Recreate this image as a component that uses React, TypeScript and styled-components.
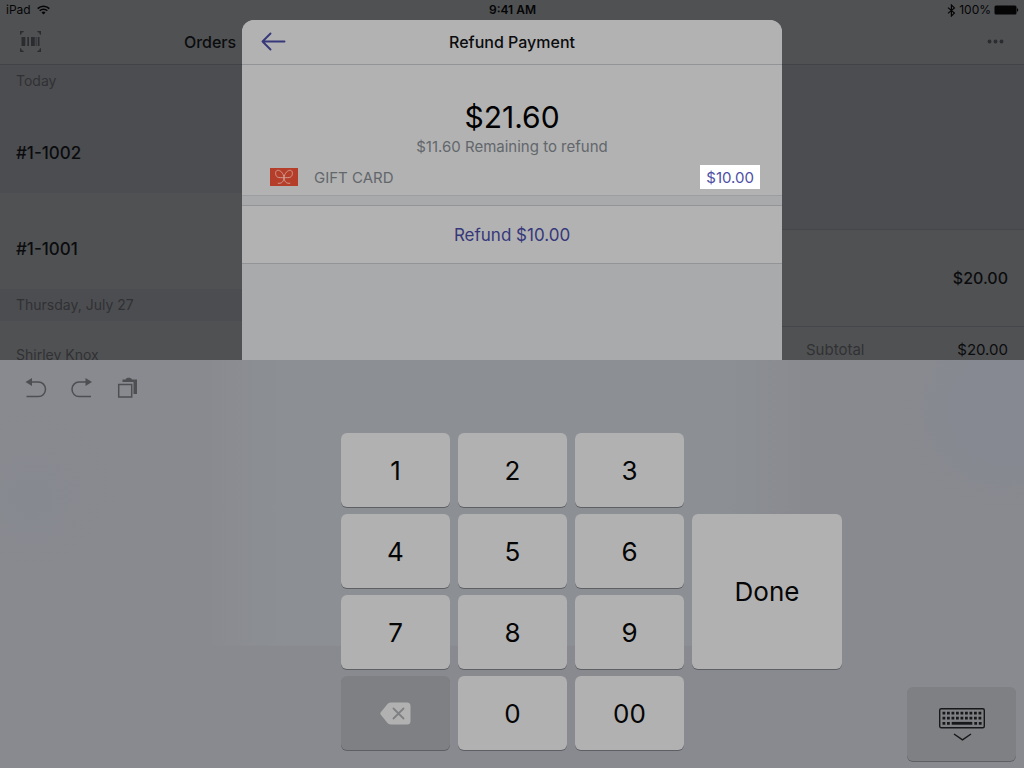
import React from "react";
import styled, { createGlobalStyle } from "styled-components";

const GlobalStyle = createGlobalStyle`
  *, *::before, *::after { box-sizing: border-box; }
  body {
    margin: 0;
    font-family: Inter, "Liberation Sans", sans-serif;
    background: #505153;
    color: #0b0c0e;
  }
  button, input { font: inherit; color: inherit; }
  button { border: 0; padding: 0; background: none; cursor: pointer; }
  h1, h2, p, ul { margin: 0; padding: 0; font-weight: 400; }
  svg { display: block; }
`;

const Screen = styled.div`
  display: flex;
  flex-direction: column;
  height: 100vh;
  min-height: 560px;
  overflow: hidden;
`;

const Stage = styled.div`
  position: relative;
  flex: 1;
  min-height: 0;
  overflow: hidden;
  display: flex;
  flex-direction: column;
`;

const StatusBar = styled.header`
  display: grid;
  grid-template-columns: 1fr auto 1fr;
  align-items: center;
  flex: none;
  height: 20px;
  padding: 0 5px 0 6px;
  font-size: 12px;
  line-height: 20px;
  color: #050506;
`;

const StatusGroup = styled.div<{ $end?: boolean }>`
  display: flex;
  align-items: center;
  gap: ${(p) => (p.$end ? 3 : 6)}px;
  justify-content: ${(p) => (p.$end ? "flex-end" : "flex-start")};
`;

const Clock = styled.time`
  font-weight: 600;
`;

const Columns = styled.div`
  display: flex;
  flex: 1;
  min-height: 0;
`;

const Sidebar = styled.nav`
  flex: none;
  width: 420px;
`;

const Detail = styled.section`
  flex: 1;
  min-width: 0;
`;

const NavBar = styled.div`
  display: grid;
  grid-template-columns: 1fr auto 1fr;
  align-items: center;
  height: 45px;
  padding: 0 20px;
  border-bottom: 1px solid #424346;
`;

const NavTitle = styled.h2`
  grid-column: 2;
  font-size: 16px;
  line-height: 24px;
  font-weight: 500;
`;

const IconButton = styled.button<{ $end?: boolean }>`
  justify-self: ${(p) => (p.$end ? "end" : "start")};
  height: 23px;
  color: #2b2c2f;

  svg { margin-bottom: 2px; }
`;

const SectionLabel = styled.h2`
  height: 32px;
  padding: 0 16px;
  font-size: 14px;
  line-height: 32px;
  color: #303134;
  background: #4c4d50;
`;

const OrderRow = styled.a<{ $selected?: boolean }>`
  display: block;
  height: 96px;
  padding: 23px 16px 0;
  color: inherit;
  text-decoration: none;
  background: ${(p) => (p.$selected ? "#4c4d50" : "#505153")};
`;

const Customer = styled.p`
  height: 22px;
  font-size: 14px;
  line-height: 22px;
  color: #303134;
`;

const OrderNumber = styled.p`
  font-size: 17px;
  line-height: 22px;
  font-weight: 500;
`;

const DetailSpace = styled.div`
  height: 165px;
  background: #4c4d50;
  border-bottom: 1px solid #45464a;
`;

const DetailRow = styled.div<{ $tall?: boolean }>`
  display: flex;
  align-items: center;
  justify-content: space-between;
  height: ${(p) => (p.$tall ? 97 : 45)}px;
  padding: 0 16px;
  font-size: ${(p) => (p.$tall ? 16 : 15)}px;
  font-weight: ${(p) => (p.$tall ? 500 : 400)};
  border-bottom: 1px solid #45464a;
`;

const Totals = styled.div`
  margin-left: 370px;
`;

const Muted = styled.span`
  color: #303134;
`;

const Dialog = styled.section`
  position: absolute;
  top: 20px;
  bottom: 0;
  left: 50%;
  width: 540px;
  margin-left: -270px;
  overflow: hidden;
  border-radius: 12px 12px 0 0;
  background: #a9aaac;
`;

const DialogBar = styled.div`
  display: grid;
  grid-template-columns: 1fr auto 1fr;
  align-items: center;
  height: 45px;
  padding: 0 18px;
  background: #b2b2b2;
  border-bottom: 1px solid #939497;
`;

const BackButton = styled.button`
  justify-self: start;
  color: #36387a;
`;

const DialogTitle = styled.h1`
  font-size: 16px;
  line-height: 24px;
  font-weight: 500;
`;

const Payment = styled.div`
  height: 131px;
  padding-top: 32px;
  text-align: center;
  background: #b2b2b2;
  border-bottom: 1px solid #9b9da0;
`;

const Amount = styled.p`
  font-size: 30px;
  line-height: 40px;
  color: #000;
`;

const Remaining = styled.p`
  font-size: 15px;
  line-height: 20px;
  color: #62676c;
`;

const Tender = styled.div`
  display: flex;
  align-items: center;
  height: 24px;
  margin-top: 8px;
  padding: 0 22px 0 28px;
`;

const TenderLabel = styled.label`
  flex: 1;
  margin-left: 16px;
  text-align: left;
  font-size: 15px;
  color: #62676c;
`;

const AmountInput = styled.input`
  width: 60px;
  height: 24px;
  padding: 0 6px;
  border: 0;
  border-radius: 0;
  outline: 0;
  text-align: right;
  font-size: 15px;
  color: #4e50a6;
  background: #fff;
`;

const RefundButton = styled.button`
  display: block;
  width: 100%;
  height: 59px;
  margin-top: 9px;
  font-size: 17px;
  color: #36387a;
  background: #b2b2b2;
  border-top: 1px solid #939497;
  border-bottom: 1px solid #939497;
`;

const Keyboard = styled.section`
  flex: none;
  background:
    radial-gradient(circle at 98% 12%, #84889388 0, #84889388 5%, #84889300 10%),
    radial-gradient(circle at 3% 34%, #84889366 0, #84889300 10%),
    linear-gradient(90deg, #8a8c9100 20%, #8c9095 28%, #8c9095 70%, #8a8c9100 79%) 0 0 / 100% 70% no-repeat,
    #898a8f;
`;

const EditTools = styled.div`
  display: flex;
  gap: 22px;
  height: 73px;
  padding: 16px 24px 0;
  color: #4e4f53;
`;

const ToolButton = styled.button`
  width: 24px;
  height: 24px;
`;

const Keypad = styled.div`
  display: grid;
  grid-template-columns: minmax(0, 1fr) repeat(3, 109px) minmax(150px, 1fr);
  grid-template-rows: repeat(4, 74px) 4px;
  gap: 7px 8px;
  padding: 0 8px 7px 9px;
`;

type Kind = "digit" | "done" | "delete" | "dismiss";

const placement: Record<Kind, string> = {
  digit: "",
  done: "grid-column: 5; grid-row: 2 / span 2; width: 150px;",
  delete: "grid-column: 2; grid-row: 4;",
  dismiss:
    "grid-column: 5; grid-row: 4 / span 2; width: 109px; height: 74px; justify-self: end; align-self: end;",
};

const Key = styled.button<{ $kind?: Kind; $col?: number; $row?: number }>`
  display: flex;
  align-items: center;
  justify-content: center;
  grid-column: ${(p) => p.$col};
  grid-row: ${(p) => p.$row};
  font-size: 26px;
  color: #050505;
  border-radius: 6px;
  background: ${(p) => (p.$kind === "delete" || p.$kind === "dismiss" ? "#7f8083" : "#b1b1b1")};
  box-shadow: 0 1px 0 #5e5f63;
  ${(p) => placement[p.$kind ?? "digit"]}
`;

const WifiIcon = () => (
  <svg width="13" height="10" viewBox="0 0 13 10" fill="none" stroke="currentColor" strokeWidth="1.6">
    <path d="M.7 3.6a8.3 8.3 0 0 1 11.600 0M2.700 5.800a5.400 5.400 0 0 1 7.600 0" />
    <path d="M6.500 9.500 4.500 7.400a2.900 2.900 0 0 1 4 0Z" fill="currentColor" stroke="none" />
  </svg>
);

const BluetoothIcon = () => (
  <svg width="9" height="13" viewBox="0 0 9 13" fill="none" stroke="currentColor" strokeWidth="1.2">
    <path d="m1 3.600 6.400 5.500L4.400 12V1l3 2.900L1 9.400" />
  </svg>
);

const BatteryIcon = () => (
  <svg width="25" height="10" viewBox="0 0 25 10" fill="currentColor">
    <rect x=".5" y=".5" width="22" height="9" rx="1.5" />
    <path d="M23 3.300c1.600.2 1.600 3.200 0 3.400Z" />
  </svg>
);

const BarcodeIcon = () => (
  <svg width="21" height="21" viewBox="0 0 21 21" fill="currentColor">
    <path d="M0 4V0h4L3 1.600H1.600V3ZM21 4V0h-4l1 1.600h1.400V3ZM0 17v4h4l-1-1.600H1.600V18ZM21 17v4h-4l1-1.600h1.400V18Z" />
    <path d="M1.500 6h3.800v9H1.500ZM7.300 6h1.700v9H7.300ZM11 6h3.800v9H11ZM15.700 6h.8v9h-.8ZM17.800 6h1.700v9h-1.700Z" />
  </svg>
);

const MoreIcon = () => (
  <svg width="17" height="5" viewBox="0 0 17 5" fill="currentColor">
    <circle cx="2.500" cy="2.500" r="1.900" />
    <circle cx="8.500" cy="2.500" r="1.900" />
    <circle cx="14.500" cy="2.500" r="1.900" />
  </svg>
);

const BackIcon = () => (
  <svg width="26" height="20" viewBox="0 0 26 20" fill="none" stroke="currentColor" strokeWidth="1.900" strokeLinecap="round" strokeLinejoin="round">
    <path d="M10.500 1.500 2.500 9.500l8 8M2.500 9.500h22" />
  </svg>
);

const GiftCardIcon = () => (
  <svg width="28" height="18" viewBox="0 0 28 18" fill="none" stroke="#d4a397" strokeWidth=".9">
    <rect width="28" height="18" fill="#b53e2b" stroke="none" />
    <path d="M14 9.800C13.500 5.500 10.500 1.800 7.300 2.400 4.800 3 5.300 7.800 7.300 9c1.800 1.100 4.500.3 6.700.8 2.200-.5 4.900.3 6.700-.8 2-1.200 2.500-6 0-6.600-3.200-.6-6.200 3.100-6.700 7.400ZM14 9.800c-.3 3.600-2.500 6.200-6.200 5.400M14 9.800c.3 3.600 2.500 6.200 6.200 5.400" />
  </svg>
);

const UndoIcon = () => (
  <svg width="24" height="24" viewBox="0 0 24 24" fill="none" stroke="currentColor" strokeWidth="1.500">
    <path d="M5 6h9.500a7 7.300 0 0 1 0 14.600H2.500" />
    <path d="M1.500 6 8 2v8Z" fill="currentColor" stroke="none" />
  </svg>
);

const RedoIcon = () => (
  <svg width="24" height="24" viewBox="0 0 24 24" fill="none" stroke="currentColor" strokeWidth="1.500">
    <path d="M18.500 6H9a7 7.300 0 0 0 0 14.600h12" />
    <path d="M22 6 15.500 2v8Z" fill="currentColor" stroke="none" />
  </svg>
);

const PasteIcon = () => (
  <svg width="24" height="24" viewBox="0 0 24 24" fill="none" stroke="currentColor" strokeWidth="1.500">
    <path d="M2.700 8.500h13v12.500h-13Z" />
    <path d="M6.500 6V3.500h3c.5-2.200 6-2.200 6.500 0h5v14.600h-3.500V6Z" fill="currentColor" stroke="none" />
  </svg>
);

const DeleteIcon = () => (
  <svg width="31" height="23" viewBox="0 0 31 23" fill="none">
    <path d="M10.500.5h16.500a3.500 3.500 0 0 1 3.500 3.500v15a3.500 3.500 0 0 1-3.500 3.500H10.500a4 4 0 0 1-3-1.400L1 13a2.300 2.300 0 0 1 0-3l6.500-8a4 4 0 0 1 3-1.500Z" fill="#b1b1b1" />
    <path d="m13.500 6.500 10 10m0-10-10 10" stroke="#7f8083" strokeWidth="1.800" strokeLinecap="round" />
  </svg>
);

const DismissIcon = () => (
  <svg width="46" height="34" viewBox="0 0 46 34" fill="none" stroke="#17181a" strokeWidth="1.400">
    <rect x=".7" y="1.700" width="44.600" height="19" rx="1.500" />
    <path d="M3.500 6.200h39M3.500 11.200h39" strokeWidth="2.800" strokeDasharray="2.800 1.700" />
    <path d="M3.500 16.300h7.300M35.300 16.300h7.300" strokeWidth="2.800" strokeDasharray="2.800 1.700" />
    <path d="M12.700 16.300h20.600" strokeWidth="2.800" />
    <path d="m15 27 8.500 5.800 8.500-5.800" strokeWidth="1.500" />
  </svg>
);

const digits = ["1", "2", "3", "4", "5", "6", "7", "8", "9"];

export default function App() {
  return (
    <Screen>
      <GlobalStyle />
      <Stage>
        <StatusBar>
          <StatusGroup>
            <span>iPad</span>
            <WifiIcon />
          </StatusGroup>
          <Clock>9:41 AM</Clock>
          <StatusGroup $end>
            <BluetoothIcon />
            <span>100%</span>
            <BatteryIcon />
          </StatusGroup>
        </StatusBar>
        <Columns>
          <Sidebar>
            <NavBar>
              <IconButton aria-label="Scan barcode"><BarcodeIcon /></IconButton>
              <NavTitle>Orders</NavTitle>
            </NavBar>
            <SectionLabel>Today</SectionLabel>
            <OrderRow href="#1002" $selected>
              <Customer />
              <OrderNumber>#1-1002</OrderNumber>
            </OrderRow>
            <OrderRow href="#1001">
              <Customer />
              <OrderNumber>#1-1001</OrderNumber>
            </OrderRow>
            <SectionLabel>Thursday, July 27</SectionLabel>
            <OrderRow href="#knox">
              <Customer>Shirley Knox</Customer>
            </OrderRow>
          </Sidebar>
          <Detail>
            <NavBar>
              <span />
              <span />
              <IconButton $end aria-label="More"><MoreIcon /></IconButton>
            </NavBar>
            <DetailSpace />
            <DetailRow $tall>
              <span />
              <span>$20.00</span>
            </DetailRow>
            <Totals>
              <DetailRow>
                <Muted>Subtotal</Muted>
                <span>$20.00</span>
              </DetailRow>
            </Totals>
          </Detail>
        </Columns>
        <Dialog role="dialog" aria-labelledby="refund-title">
          <DialogBar>
            <BackButton aria-label="Back"><BackIcon /></BackButton>
            <DialogTitle id="refund-title">Refund Payment</DialogTitle>
          </DialogBar>
          <Payment>
            <Amount>$21.60</Amount>
            <Remaining>$11.60 Remaining to refund</Remaining>
            <Tender>
              <GiftCardIcon />
              <TenderLabel htmlFor="gift-card-amount">GIFT CARD</TenderLabel>
              <AmountInput id="gift-card-amount" inputMode="decimal" defaultValue="$10.00" />
            </Tender>
          </Payment>
          <RefundButton>Refund $10.00</RefundButton>
        </Dialog>
      </Stage>
      <Keyboard aria-label="Keyboard">
        <EditTools>
          <ToolButton aria-label="Undo"><UndoIcon /></ToolButton>
          <ToolButton aria-label="Redo"><RedoIcon /></ToolButton>
          <ToolButton aria-label="Paste"><PasteIcon /></ToolButton>
        </EditTools>
        <Keypad>
          {digits.map((d, i) => (
            <Key key={d} $col={2 + (i % 3)} $row={1 + Math.floor(i / 3)}>{d}</Key>
          ))}
          <Key $kind="done">Done</Key>
          <Key $kind="delete" aria-label="Delete"><DeleteIcon /></Key>
          <Key $col={3} $row={4}>0</Key>
          <Key $col={4} $row={4}>00</Key>
          <Key $kind="dismiss" aria-label="Hide keyboard"><DismissIcon /></Key>
        </Keypad>
      </Keyboard>
    </Screen>
  );
}
